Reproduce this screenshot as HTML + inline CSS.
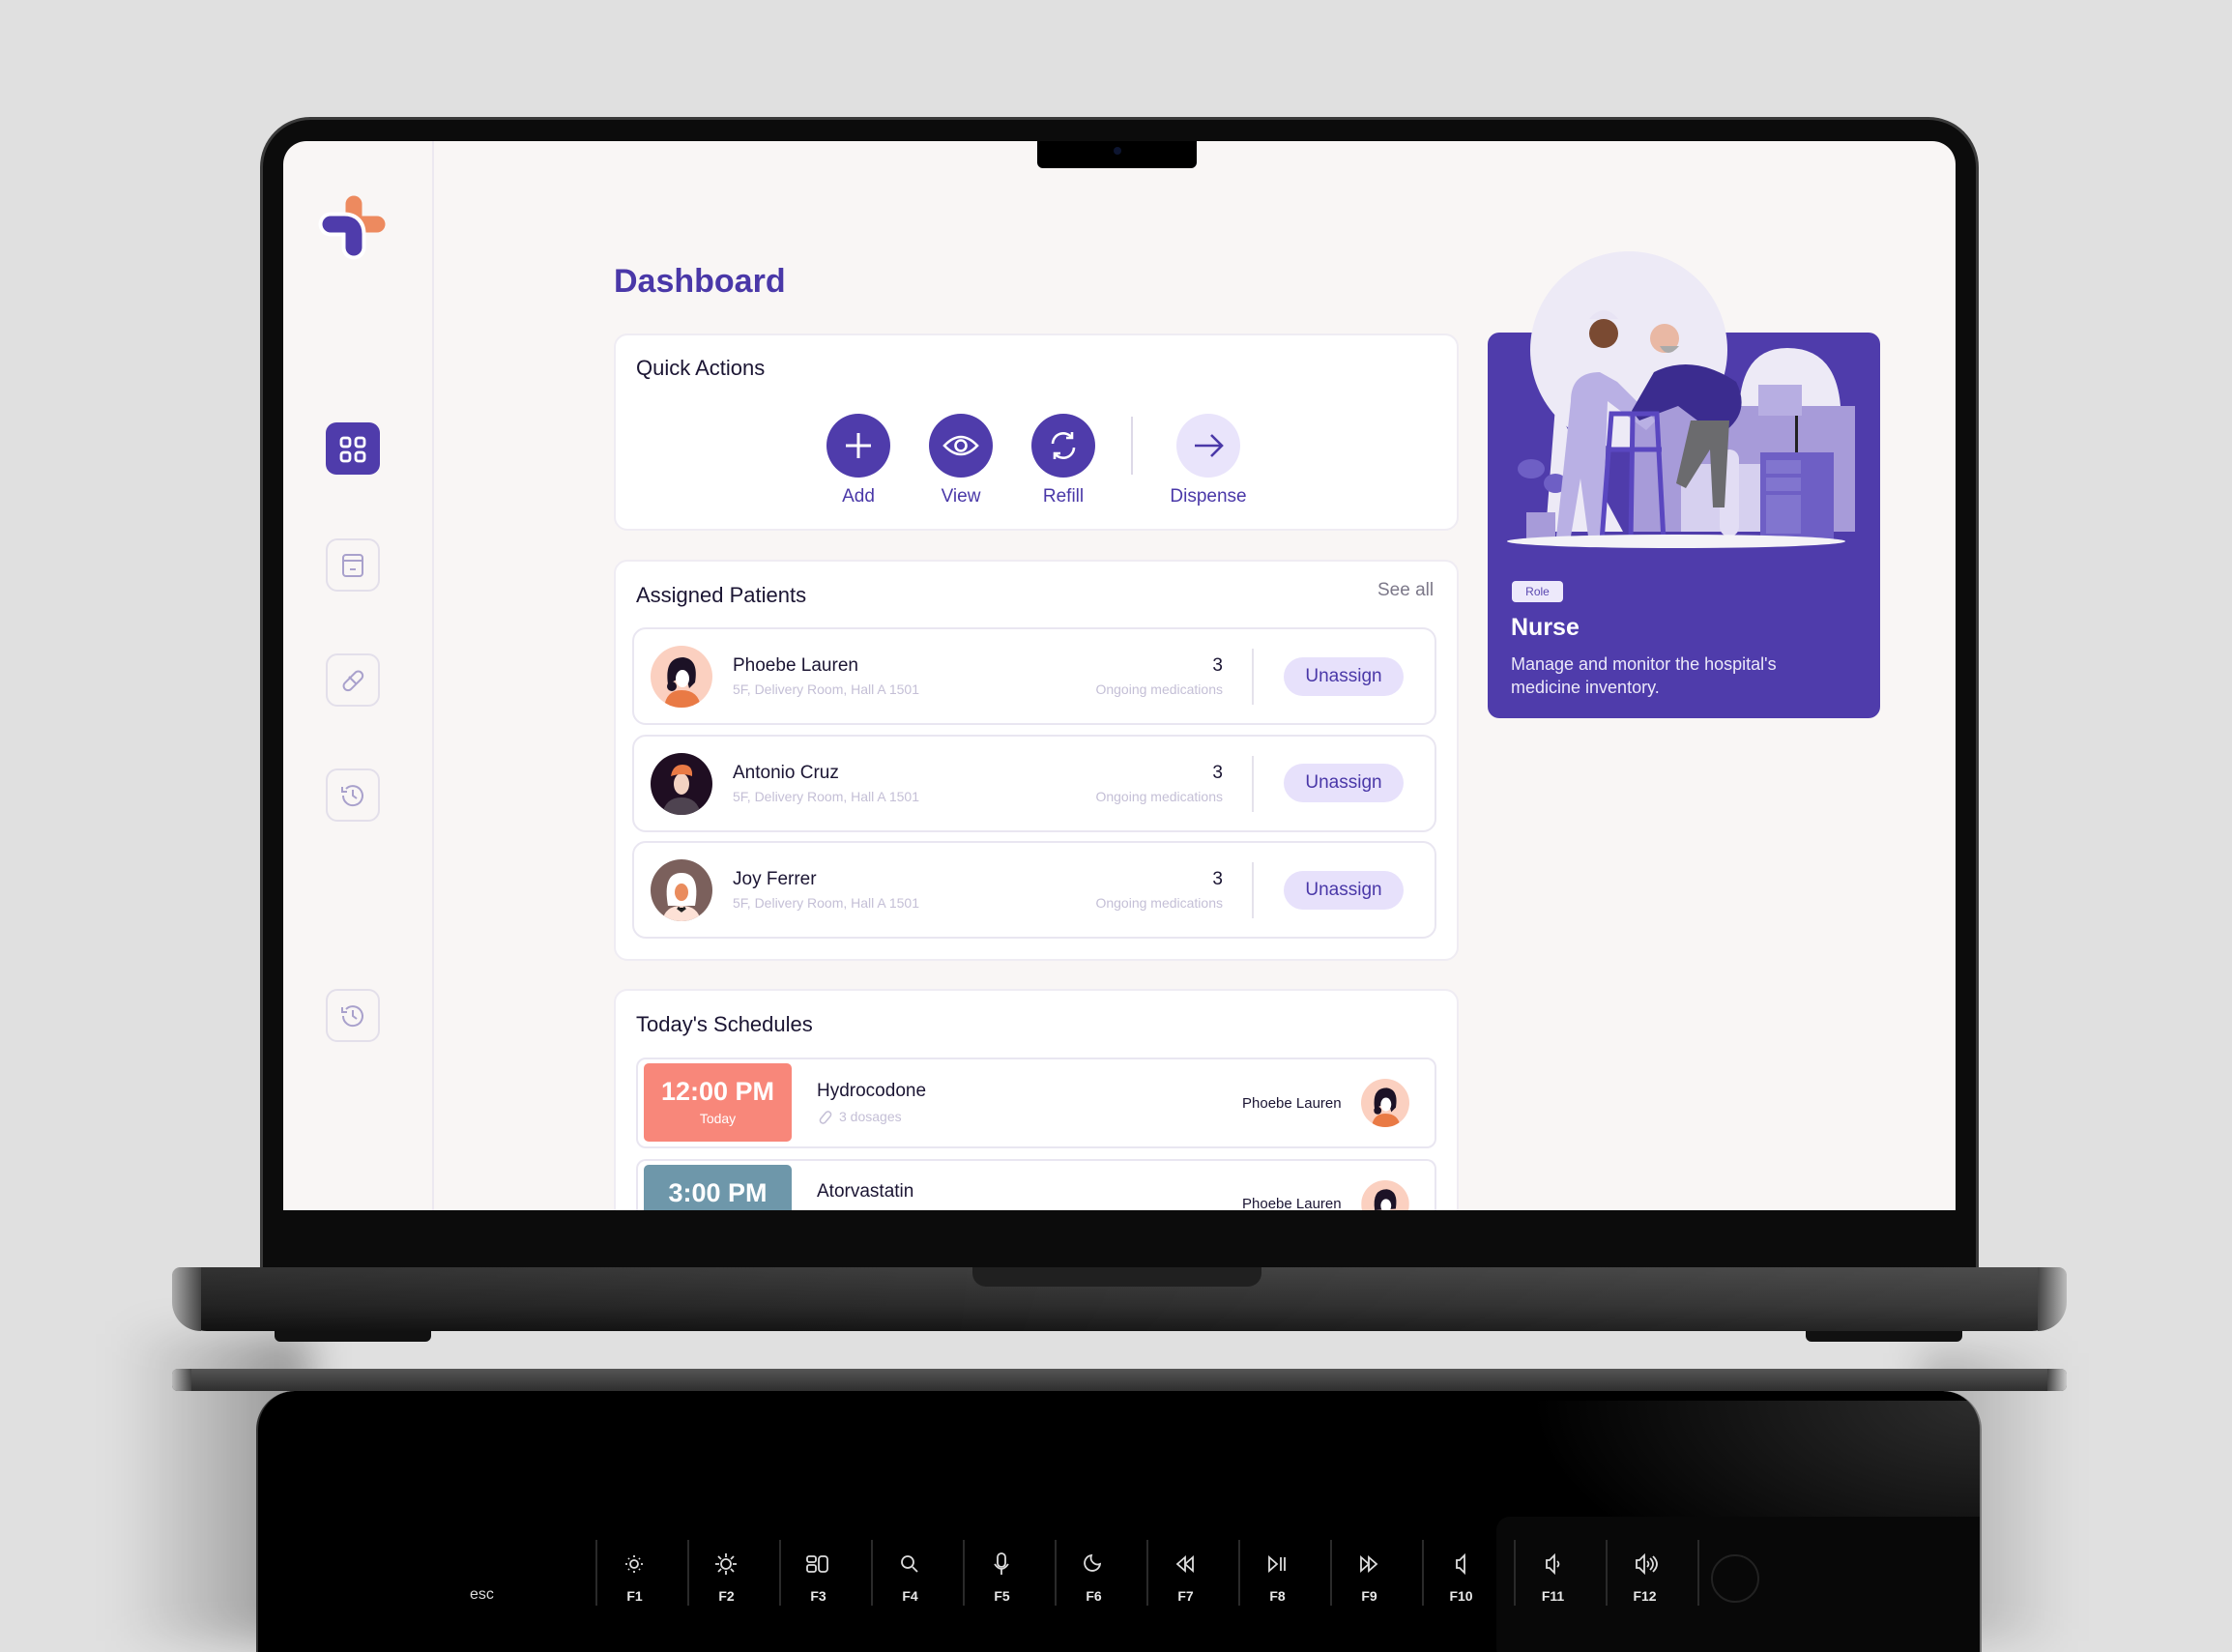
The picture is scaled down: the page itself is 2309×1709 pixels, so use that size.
<!DOCTYPE html>
<html><head><meta charset="utf-8"><style>
*{margin:0;padding:0;box-sizing:border-box}
body{width:2309px;height:1698px;background:#e0e0e0;position:relative;overflow:hidden;font-family:"Liberation Sans",sans-serif}
.a{position:absolute}
.t{position:absolute;white-space:nowrap}
.card{position:absolute;background:#fff;border:2px solid #efecf3;border-radius:14px}
.row{position:absolute;left:654px;width:832px;height:101px;border:2px solid #e9e6f1;border-radius:14px;background:#fff}
.nm{font-size:19px;color:#1b1533}
.sub{font-size:14px;color:#c4bfd6}
.r{text-align:right;width:300px}
.pill{position:absolute;width:124px;height:40px;border-radius:20px;background:#e7e1fb;color:#4a38a8;font-size:19px;text-align:center;line-height:40px}
.side{position:absolute;left:337px;width:56px;height:55px;border:2px solid #e3dfea;border-radius:12px}
.circ{position:absolute;width:66px;height:66px;border-radius:50%;background:#4f3cab}
.lbl{position:absolute;font-size:19px;color:#4a38a8;text-align:center;width:120px}
.key{position:absolute;top:1593px;height:68px;border-left:2px solid #2a2a2a}
.kl{position:absolute;top:1643px;color:#e8e8e8;font-size:14px;font-weight:bold;text-align:center;width:95px}
</style></head><body>
<div class="a" style="left:120px;top:1380px;width:200px;height:318px;background:linear-gradient(90deg,rgba(0,0,0,0),rgba(0,0,0,.35));filter:blur(20px)"></div>
<div class="a" style="left:1990px;top:1400px;width:150px;height:298px;background:linear-gradient(90deg,rgba(0,0,0,.25),rgba(0,0,0,0));filter:blur(20px)"></div>
<div class="a" style="left:269px;top:121px;width:1778px;height:1200px;background:#0c0c0c;border-radius:52px 52px 0 0;border:3px solid #3a3a3a;border-bottom:none"></div>
<div class="a" style="left:293px;top:146px;width:1730px;height:1106px;background:#f9f6f5;overflow:hidden;border-radius:24px 24px 0 0"></div>
<div class="a" style="left:447px;top:146px;width:2px;height:1106px;background:#ece8f0"></div>
<div class="a" style="left:1073px;top:146px;width:165px;height:28px;background:#000;border-radius:0 0 6px 6px"></div>
<div class="a" style="left:1152px;top:152px;width:8px;height:8px;border-radius:50%;background:#0d1530"></div>
<svg class="a" style="left:325px;top:195px" width="85" height="80" viewBox="325 195 85 80">
<path d="M366 211 L366 232 L390 232" stroke="#ed8a5f" stroke-width="17" stroke-linecap="round" stroke-linejoin="round" fill="none"/>
<path d="M342 232 L356 232 Q366 232 366 242 L366 256" stroke="#fff" stroke-width="25" stroke-linecap="round" fill="none"/>
<path d="M342 232 L356 232 Q366 232 366 242 L366 256" stroke="#4f3cab" stroke-width="17" stroke-linecap="round" fill="none"/>
</svg>
<div class="a" style="left:337px;top:437px;width:56px;height:54px;border-radius:11px;background:#4f3cab"></div>
<svg class="a" style="left:350px;top:450px" width="30" height="30" viewBox="0 0 30 30" fill="none" stroke="#fff" stroke-width="2.8"><rect x="3" y="3" width="9" height="9" rx="2.5"/><rect x="18" y="3" width="9" height="9" rx="2.5"/><rect x="3" y="18" width="9" height="9" rx="2.5"/><rect x="18" y="18" width="9" height="9" rx="2.5"/></svg>
<div class="side" style="top:557px"></div>
<svg class="a" style="left:350px;top:570px" width="30" height="30" viewBox="0 0 30 30" fill="none" stroke="#a9a1cc" stroke-width="2"><rect x="5" y="4" width="20" height="22" rx="3"/><path d="M5 10h20M12 19h6"/></svg>
<div class="side" style="top:676px"></div>
<svg class="a" style="left:350px;top:689px" width="30" height="30" viewBox="0 0 30 30" fill="none" stroke="#a9a1cc" stroke-width="2"><rect x="3" y="11" width="24" height="9" rx="4.5" transform="rotate(-45 15 15)"/><path d="M11 11l8 8"/></svg>
<div class="side" style="top:795px"></div>
<svg class="a" style="left:350px;top:808px" width="30" height="30" viewBox="0 0 30 30" fill="none" stroke="#a9a1cc" stroke-width="2"><path d="M5 15a10 10 0 1 0 3-7"/><path d="M4 6v5h5M15 9v6l4 3"/></svg>
<div class="side" style="top:1023px"></div>
<svg class="a" style="left:350px;top:1036px" width="30" height="30" viewBox="0 0 30 30" fill="none" stroke="#a9a1cc" stroke-width="2"><path d="M5 15a10 10 0 1 0 3-7"/><path d="M4 6v5h5M15 9v6l4 3"/></svg>

<div class="t" style="left:635px;top:272px;font-size:34px;font-weight:bold;color:#4a38a8">Dashboard</div>

<div class="card" style="left:635px;top:345px;width:874px;height:204px"></div>
<div class="t" style="left:658px;top:368px;font-size:22px;color:#1b1533">Quick Actions</div>
<div class="circ" style="left:855px;top:428px"></div>
<svg class="a" style="left:855px;top:428px" width="66" height="66" fill="none" stroke="#fff" stroke-width="3"><path d="M33 20v26M20 33h26"/></svg>
<div class="circ" style="left:961px;top:428px"></div>
<svg class="a" style="left:961px;top:428px" width="66" height="66" fill="none" stroke="#fff" stroke-width="2.6"><path d="M16 33q17-18 34 0q-17 18-34 0z"/><circle cx="33" cy="33" r="5.5"/></svg>
<div class="circ" style="left:1067px;top:428px"></div>
<svg class="a" style="left:1067px;top:428px" width="66" height="66" fill="none" stroke="#fff" stroke-width="2.6"><path d="M22 31a11 11 0 0 1 20-6M44 35a11 11 0 0 1-20 6"/><path d="M42 19v6h-6M24 47v-6h6"/></svg>
<div class="a" style="left:1170px;top:431px;width:2px;height:60px;background:#ddd9e8"></div>
<div class="circ" style="left:1217px;top:428px;background:#e9e4fb"></div>
<svg class="a" style="left:1217px;top:428px" width="66" height="66" fill="none" stroke="#4a38a8" stroke-width="2.6"><path d="M19 33h28M36 22l11 11-11 11"/></svg>
<div class="lbl" style="left:828px;top:503px">Add</div>
<div class="lbl" style="left:934px;top:503px">View</div>
<div class="lbl" style="left:1040px;top:503px">Refill</div>
<div class="lbl" style="left:1190px;top:503px">Dispense</div>

<div class="card" style="left:635px;top:579px;width:874px;height:415px"></div>
<div class="t" style="left:658px;top:603px;font-size:22px;color:#1b1533">Assigned Patients</div>
<div class="t" style="left:1425px;top:600px;font-size:19px;color:#7c7889">See all</div>

<div class="row" style="top:649px"></div>
<div class="row" style="top:760px"></div>
<div class="row" style="top:870px"></div>

<svg class="a" style="left:673px;top:668px" width="64" height="64" viewBox="0 0 64 64"><defs><clipPath id="c1"><circle cx="32" cy="32" r="32"/></clipPath></defs><g clip-path="url(#c1)"><rect width="64" height="64" fill="#fbd0c0"/><path d="M18 40q-4-28 16-28q16 2 12 26l-6 6-4-14z" fill="#1c1226"/><ellipse cx="33" cy="34" rx="7" ry="9" fill="#fff"/><path d="M14 64q2-18 18-18q18 0 20 18z" fill="#e97a45"/><circle cx="22" cy="42" r="5" fill="#1c1226"/></g></svg>
<svg class="a" style="left:673px;top:779px" width="64" height="64" viewBox="0 0 64 64"><defs><clipPath id="c2"><circle cx="32" cy="32" r="32"/></clipPath></defs><g clip-path="url(#c2)"><rect width="64" height="64" fill="#1f0e22"/><ellipse cx="32" cy="32" rx="8" ry="11" fill="#f3d2c2"/><path d="M21 24q2-12 12-12q11 0 10 12q-10-4-22 0z" fill="#e97a45"/><path d="M12 64q3-18 20-18q17 0 20 18z" fill="#4e4350"/></g></svg>
<svg class="a" style="left:673px;top:889px" width="64" height="64" viewBox="0 0 64 64"><defs><clipPath id="c3"><circle cx="32" cy="32" r="32"/></clipPath></defs><g clip-path="url(#c3)"><rect width="64" height="64" fill="#7b605c"/><path d="M18 48q-6-34 14-34q20 0 14 34z" fill="#fff"/><ellipse cx="32" cy="34" rx="7" ry="9" fill="#e98c5e"/><path d="M12 64q3-16 20-16q17 0 20 16z" fill="#fde1d6"/><path d="M28 50l4 3 4-3" stroke="#222" stroke-width="3"/></g></svg>

<div class="t nm" style="left:758px;top:678px">Phoebe Lauren</div>
<div class="t sub" style="left:758px;top:705px">5F, Delivery Room, Hall A 1501</div>
<div class="t nm" style="left:758px;top:789px">Antonio Cruz</div>
<div class="t sub" style="left:758px;top:816px">5F, Delivery Room, Hall A 1501</div>
<div class="t nm" style="left:758px;top:899px">Joy Ferrer</div>
<div class="t sub" style="left:758px;top:926px">5F, Delivery Room, Hall A 1501</div>
<div class="t nm r" style="left:965px;top:678px">3</div>
<div class="t sub r" style="left:965px;top:705px">Ongoing medications</div>
<div class="t nm r" style="left:965px;top:789px">3</div>
<div class="t sub r" style="left:965px;top:816px">Ongoing medications</div>
<div class="t nm r" style="left:965px;top:899px">3</div>
<div class="t sub r" style="left:965px;top:926px">Ongoing medications</div>
<div class="a" style="left:1295px;top:671px;width:2px;height:58px;background:#e5e2ec"></div>
<div class="a" style="left:1295px;top:782px;width:2px;height:58px;background:#e5e2ec"></div>
<div class="a" style="left:1295px;top:892px;width:2px;height:58px;background:#e5e2ec"></div>
<div class="pill" style="left:1328px;top:680px">Unassign</div>
<div class="pill" style="left:1328px;top:790px">Unassign</div>
<div class="pill" style="left:1328px;top:901px">Unassign</div>

<div class="a" style="left:635px;top:1023px;width:874px;height:229px;overflow:hidden">
<div class="card" style="left:0;top:0;width:874px;height:260px"></div>
</div>
<div class="t" style="left:658px;top:1047px;font-size:22px;color:#1b1533">Today's Schedules</div>
<div class="a" style="left:658px;top:1094px;width:828px;height:94px;border:2px solid #e9e6f1;border-radius:10px;background:#fff"></div>
<div class="a" style="left:666px;top:1100px;width:153px;height:81px;background:#f8877a;border-radius:5px"></div>
<div class="t" style="left:666px;top:1114px;width:153px;text-align:center;color:#fff;font-size:27px;font-weight:bold">12:00 PM</div>
<div class="t" style="left:666px;top:1149px;width:153px;text-align:center;color:#fff;font-size:14px">Today</div>
<div class="t nm" style="left:845px;top:1118px">Hydrocodone</div>
<svg class="a" style="left:845px;top:1147px" width="18" height="18" fill="none" stroke="#c4bfd6" stroke-width="1.5"><rect x="2" y="6" width="14" height="6" rx="3" transform="rotate(-50 9 9)"/></svg>
<div class="t sub" style="left:868px;top:1147px">3 dosages</div>
<div class="t" style="left:1285px;top:1133px;font-size:15px;color:#1b1533">Phoebe Lauren</div>
<svg class="a" style="left:1408px;top:1116px" width="50" height="50" viewBox="0 0 64 64"><defs><clipPath id="c4"><circle cx="32" cy="32" r="32"/></clipPath></defs><g clip-path="url(#c4)"><rect width="64" height="64" fill="#fbd0c0"/><path d="M18 40q-4-28 16-28q16 2 12 26l-6 6-4-14z" fill="#1c1226"/><ellipse cx="33" cy="34" rx="7" ry="9" fill="#fff"/><path d="M14 64q2-18 18-18q18 0 20 18z" fill="#e97a45"/><circle cx="22" cy="42" r="5" fill="#1c1226"/></g></svg>
<div class="a" style="left:658px;top:1199px;width:828px;height:53px;border:2px solid #e9e6f1;border-bottom:none;border-radius:10px 10px 0 0;background:#fff;overflow:hidden"></div>
<div class="a" style="left:666px;top:1205px;width:153px;height:47px;background:#6e97aa;border-radius:5px 5px 0 0"></div>
<div class="t" style="left:666px;top:1219px;width:153px;text-align:center;color:#fff;font-size:27px;font-weight:bold">3:00 PM</div>
<div class="t nm" style="left:845px;top:1222px">Atorvastatin</div>
<div class="t" style="left:1285px;top:1237px;font-size:15px;color:#1b1533">Phoebe Lauren</div>
<svg class="a" style="left:1408px;top:1221px" width="50" height="31" viewBox="0 0 64 40"><defs><clipPath id="c5"><circle cx="32" cy="32" r="32"/></clipPath></defs><g clip-path="url(#c5)"><rect width="64" height="64" fill="#fbd0c0"/><path d="M18 40q-4-28 16-28q16 2 12 26z" fill="#1c1226"/><ellipse cx="33" cy="34" rx="7" ry="9" fill="#fff"/></g></svg>

<div class="a" style="left:1539px;top:344px;width:406px;height:399px;background:#4f3cab;border-radius:12px"></div>
<svg class="a" style="left:1539px;top:250px" width="406" height="330" viewBox="0 0 406 330">
<circle cx="146" cy="112" r="102" fill="#edeaf6"/>
<path d="M70 170 L140 300 L60 300z" fill="#edeaf6"/>
<path d="M260 180 q0-70 50-70 q50 0 55 60 l0 130 l-105 0z" fill="#edeaf6"/>
<rect x="150" y="170" width="230" height="130" fill="#a79bd9"/>
<rect x="200" y="230" width="135" height="70" fill="#d6d0ef"/>
<rect x="240" y="215" width="20" height="90" rx="10" fill="#e2ddf4"/>
<rect x="280" y="148" width="45" height="32" fill="#b7aee2"/>
<rect x="318" y="180" width="3" height="40" fill="#222"/>
<rect x="282" y="218" width="76" height="90" fill="#6e5fc5"/>
<rect x="288" y="226" width="36" height="14" fill="#8175cf"/>
<rect x="288" y="244" width="36" height="14" fill="#8175cf"/>
<rect x="288" y="262" width="36" height="40" fill="#8175cf"/>
<ellipse cx="45" cy="235" rx="14" ry="10" fill="#6e5fc5"/>
<ellipse cx="70" cy="250" rx="12" ry="10" fill="#6e5fc5"/>
<rect x="40" y="280" width="30" height="30" fill="#a79bd9"/>
<path d="M86 165 q0-30 30-30 l18 10 l40 40 l-10 10 l-40-30 l-5 140 l-15 0 l-8-60 l-10 60 l-15 0z" fill="#b9b0e4"/>
<circle cx="120" cy="95" r="15" fill="#7a4a32"/>
<path d="M105 80 q15-18 30 0z" fill="#e8e4f4"/>
<path d="M172 135 q40-20 85 10 q15 30 -10 50 l-30 -10 l-20 -15 l-40 15 l-8-10z" fill="#3b2c8f"/>
<circle cx="183" cy="100" r="15" fill="#e9b8a4"/>
<path d="M178 108 q8 14 20 0z" fill="#aaa"/>
<path d="M210 185 l40 0 l-5 90 l-12 0 l-3-60 l-25 40 l-10-5z" fill="#6b6b6e"/>
<path d="M118 310 L128 178 L175 178 L182 310 M148 310 L150 178 M125 215 L180 215" stroke="#5a47c0" stroke-width="5" fill="none"/>
<ellipse cx="195" cy="310" rx="175" ry="7" fill="#f4f3f7"/>
</svg>
<div class="a" style="left:1564px;top:601px;width:53px;height:22px;background:#ede9fb;border-radius:4px;font-size:12px;color:#5a48b0;text-align:center;line-height:22px">Role</div>
<div class="t" style="left:1563px;top:635px;font-size:25px;font-weight:bold;color:#fff">Nurse</div>
<div class="t" style="left:1563px;top:675px;font-size:18px;color:#ece9f9;line-height:24px">Manage and monitor the hospital's<br>medicine inventory.</div>

<div class="a" style="left:178px;top:1311px;width:1960px;height:66px;border-radius:10px 10px 36px 36px;background:linear-gradient(180deg,#3e3e3e,#2b2b2b 60%,#151515)"></div>
<div class="a" style="left:178px;top:1311px;width:1960px;height:66px;border-radius:10px 10px 36px 36px;background:linear-gradient(90deg,rgba(0,0,0,.2),rgba(255,255,255,0) 40%,rgba(255,255,255,.08))"></div>
<div class="a" style="left:178px;top:1311px;width:30px;height:66px;border-radius:10px 0 0 36px;background:linear-gradient(90deg,#aaa,#444)"></div>
<div class="a" style="left:2108px;top:1311px;width:30px;height:66px;border-radius:0 10px 36px 0;background:linear-gradient(270deg,#bbb,#444)"></div>
<div class="a" style="left:1006px;top:1311px;width:299px;height:20px;background:#202020;border-radius:0 0 14px 14px"></div>
<div class="a" style="left:284px;top:1377px;width:162px;height:11px;background:#111;border-radius:0 0 6px 6px"></div>
<div class="a" style="left:1868px;top:1377px;width:162px;height:11px;background:#111;border-radius:0 0 6px 6px"></div>
<div class="a" style="left:178px;top:1416px;width:1960px;height:23px;border-radius:6px;background:linear-gradient(180deg,#555,#2f2f2f)"></div>
<div class="a" style="left:178px;top:1416px;width:20px;height:23px;border-radius:6px 0 0 6px;background:linear-gradient(90deg,#bbb,#444)"></div>
<div class="a" style="left:2118px;top:1416px;width:20px;height:23px;border-radius:0 6px 6px 0;background:linear-gradient(270deg,#ccc,#444)"></div>
<div class="a" style="left:265px;top:1439px;width:1785px;height:270px;background:#000;border-radius:40px 40px 0 0;border-left:2px solid #333;border-right:2px solid #777;overflow:hidden">
<div class="a" style="left:1235px;top:10px;width:550px;height:260px;background:radial-gradient(ellipse at 100% 0%,rgba(90,90,90,.5),rgba(0,0,0,0) 60%)"></div>
<div class="a" style="left:1599px;top:148px;width:180px;height:130px;background-image:radial-gradient(#3a3a3a 1px,transparent 1.2px);background-size:5px 5px"></div>
<div class="a" style="left:1281px;top:130px;width:570px;height:150px;background:#080808;border-radius:14px"></div>
</div>
<div class="t" style="left:486px;top:1641px;color:#ddd;font-size:16px">esc</div>
<div class="key" style="left:616px"></div>
<div class="key" style="left:711px"></div><div class="key" style="left:806px"></div><div class="key" style="left:901px"></div><div class="key" style="left:996px"></div><div class="key" style="left:1091px"></div><div class="key" style="left:1186px"></div><div class="key" style="left:1281px"></div><div class="key" style="left:1376px"></div><div class="key" style="left:1471px"></div><div class="key" style="left:1566px"></div><div class="key" style="left:1661px"></div><div class="key" style="left:1756px"></div>
<div class="kl" style="left:609px">F1</div><div class="kl" style="left:704px">F2</div><div class="kl" style="left:799px">F3</div><div class="kl" style="left:894px">F4</div><div class="kl" style="left:989px">F5</div><div class="kl" style="left:1084px">F6</div><div class="kl" style="left:1179px">F7</div><div class="kl" style="left:1274px">F8</div><div class="kl" style="left:1369px">F9</div><div class="kl" style="left:1464px">F10</div><div class="kl" style="left:1559px">F11</div><div class="kl" style="left:1654px">F12</div>
<svg class="a" style="left:600px;top:1600px" width="1150" height="36" fill="none" stroke="#ddd" stroke-width="1.8">
<g transform="translate(56,18)"><circle r="4"/><path d="M0-9v2M0 7v2M-9 0h2M7 0h2M-6-6l1 1M5 5l1 1M-6 6l1-1M5-5l1-1"/></g>
<g transform="translate(151,18)"><circle r="5"/><path d="M0-11v4M0 7v4M-11 0h4M7 0h4M-8-8l3 3M5 5l3 3M-8 8l3-3M5-5l3-3"/></g>
<g transform="translate(246,18)"><rect x="-11" y="-8" width="9" height="6" rx="2"/><rect x="-11" y="1" width="9" height="7" rx="2"/><rect x="1" y="-8" width="9" height="16" rx="3"/></g>
<g transform="translate(341,18)"><circle cx="-2" cy="-2" r="6"/><path d="M3 3l5 5"/></g>
<g transform="translate(436,18)"><rect x="-4" y="-11" width="8" height="14" rx="4"/><path d="M-7 0q7 10 14 0M0 5v6"/></g>
<g transform="translate(531,18)"><path d="M-2-9a8 8 0 1 0 9 9a7 7 0 0 1-9-9z"/></g>
<g transform="translate(626,18)"><path d="M0-7l-8 7 8 7zM8-7l-8 7 8 7z"/></g>
<g transform="translate(721,18)"><path d="M-8-7l8 7-8 7zM4-7v14M8-7v14"/></g>
<g transform="translate(816,18)"><path d="M-8-7l8 7-8 7zM0-7l8 7-8 7z"/></g>
<g transform="translate(911,18)"><path d="M-4-4h3l5-5v18l-5-5h-3z"/></g>
<g transform="translate(1006,18)"><path d="M-6-4h3l5-5v18l-5-5h-3zM5-3q3 3 0 6"/></g>
<g transform="translate(1101,18)"><path d="M-8-4h3l5-5v18l-5-5h-3zM3-3q3 3 0 6M6-6q6 6 0 12M9-8q8 8 0 16"/></g>
</svg>
<div class="a" style="left:1770px;top:1608px;width:50px;height:50px;border-radius:50%;border:2px solid #222"></div>
</body></html>
